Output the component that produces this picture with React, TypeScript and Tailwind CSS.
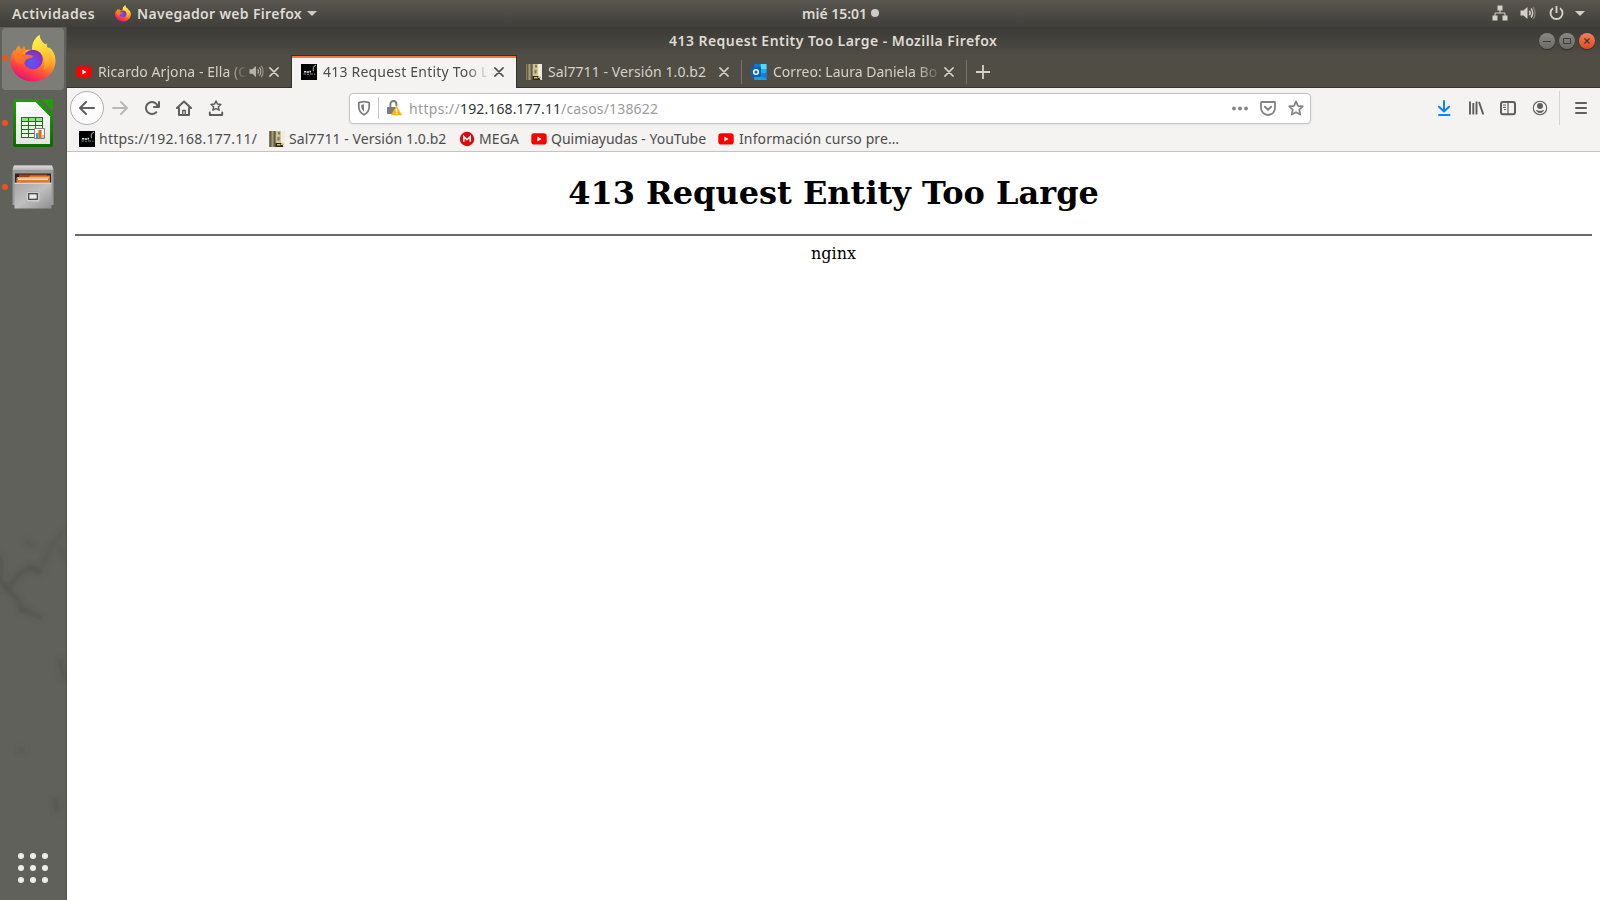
import type { ReactNode } from "react";

function FirefoxLogo({ className, id }: { className: string; id: string }) {
  return (
    <svg className={className} viewBox="0 0 46 47">
      <defs>
        <linearGradient id={`${id}-body`} x1="0.75" y1="0.1" x2="0.35" y2="1">
          <stop offset="0" stopColor="#fff14a" />
          <stop offset="0.3" stopColor="#ffbd2e" />
          <stop offset="0.55" stopColor="#ff7a2c" />
          <stop offset="0.78" stopColor="#ff3b47" />
          <stop offset="1" stopColor="#e2127c" />
        </linearGradient>
        <linearGradient id={`${id}-flame`} x1="0.3" y1="0" x2="0.6" y2="1">
          <stop offset="0" stopColor="#fff44f" />
          <stop offset="0.5" stopColor="#ffd338" />
          <stop offset="1" stopColor="#ff9a28" />
        </linearGradient>
        <radialGradient id={`${id}-globe`} cx="0.4" cy="0.65" r="0.7">
          <stop offset="0" stopColor="#5160e8" />
          <stop offset="0.5" stopColor="#7a3fe0" />
          <stop offset="1" stopColor="#8a29a8" />
        </radialGradient>
        <linearGradient id={`${id}-head`} x1="0" y1="0" x2="0.4" y2="1">
          <stop offset="0" stopColor="#ff9a1f" />
          <stop offset="1" stopColor="#ff5f30" />
        </linearGradient>
      </defs>
      <path
        d="M9 10.500c.5 2 1.500 3.500 3 4l2-3.500c.5 2 1 3.500 2 4 2-.5 4-.5 6 0C22 8 25 3 29.500 0c.5 5 3 7 5.500 9.500l1.500-1c0 2 .5 3.500 1.500 4.500l1.500-.5c4 3.500 6 8 6 13C45.500 37.500 35.500 46.500 23 46.500S.5 37.500.5 26c0-5.500 2-9 4-11.500l.5 3c.5-3 2-5 4-7z"
        fill={`url(#${id}-body)`}
      />
      <path
        d="M29.500 0c.5 5 3 7 5.500 9.500l1.500-1c0 2 .5 3.500 1.500 4.500 2 3 3.500 7 3 11-.5 5-3 9-7.500 11.500 2.500-8 1-16-5-18.500-2.500-1-4.500-1.500-6.500-2C22 8 25 3 29.500 0z"
        fill={`url(#${id}-flame)`}
      />
      <circle cx="23" cy="24.500" r="9.800" fill={`url(#${id}-globe)`} />
      <path
        d="M5 18c.5-3 2-5 4-7.500.5 2 1.500 3.500 3 4l2-3.500c.5 2 1 3.500 1.500 4.500-1.500 1-2.500 2-3.500 3.500 4 1 7 .5 10 1.500 1 .5 1 1.500 0 2-2.500 1-5 1-6.500 3-1 1.500-1 3-2 4C7 29.500 3 24.500 5 18z"
        fill={`url(#${id}-head)`}
      />
    </svg>
  );
}

function YouTubeIcon() {
  return (
    <svg className="h-4 w-4 shrink-0" viewBox="0 0 16 16">
      <rect x="0.300" y="2.300" width="15.400" height="11.200" rx="2.800" fill="#f00" />
      <path d="M6.400 5.600v4.800L10.500 8z" fill="#fff" />
    </svg>
  );
}

function BlackSiteIcon() {
  return (
    <svg className="h-4 w-4 shrink-0" viewBox="0 0 16 16">
      <rect width="16" height="16" fill="#000" />
      <path d="M3 7.800h2M5.500 8h2.500M8.500 7.600h1.500" stroke="#ddd" strokeWidth="1.600" />
      <path d="M2.500 10h2.500M6 10.200h2M9 10h3M13 10.200h1.500" stroke="#999" strokeWidth="0.900" />
      <path d="M15 1c-2.600 1-3.300 3.200-2.600 6.200" stroke="#bbb" strokeWidth="1" fill="none" />
    </svg>
  );
}

function ArchiveSiteIcon() {
  return (
    <svg className="h-4 w-4 shrink-0" viewBox="0 0 16 16">
      <rect width="16" height="16" fill="#f1ecdf" />
      <rect width="7.500" height="16" fill="#857d60" />
      <path d="M1.500 0v16M5.500 0v16" stroke="#5f5842" strokeWidth="0.900" />
      <path d="M3.500 0v16" stroke="#a39b7b" strokeWidth="1.200" />
      <rect x="7.500" width="4.500" height="12" fill="#d8c98b" />
      <path d="M9 1.500h2v2H9zM8.500 6.500h2v3h-2z" fill="#7c6d40" />
      <path d="M8.500 1.200h2.500M8.500 6.200h2.500" stroke="#6a7fc0" strokeWidth="0.900" />
      <path d="M6.500 12h6l2 4h-8z" fill="#2c2819" />
      <path d="M8 13h3.500v1.500H8zM12 12.500h3V14h-3z" fill="#cdbd79" />
    </svg>
  );
}

function MegaIcon() {
  return (
    <svg className="h-4 w-4 shrink-0" viewBox="0 0 16 16">
      <circle cx="8" cy="8" r="7.200" fill="#d9090f" />
      <path d="M4.800 10.800V5.500L8 8.700l3.200-3.200v5.300" stroke="#fff" strokeWidth="1.500" fill="none" />
    </svg>
  );
}

function OutlookIcon() {
  return (
    <svg className="h-4 w-4 shrink-0" viewBox="0 0 16 16">
      <rect x="3.500" y="0" width="12" height="11" rx="0.800" fill="#1490df" />
      <path d="M9.500 0h6v5h-6z" fill="#50d9ff" />
      <path d="M3.500 0h6v3h-6z" fill="#0f78d4" />
      <path d="M9.500 5h6v4h-6z" fill="#28a8ea" />
      <path d="M3 8l7 3.500L16 8v7.200a.8.800 0 0 1-.8.800H3.800a.8.800 0 0 1-.8-.8z" fill="#1b9de8" />
      <path d="M16 8v7.500L9.500 11.700z" fill="#1380cf" />
      <rect x="0" y="3" width="10" height="10" rx="0.800" fill="#0a62b8" />
      <circle cx="5" cy="8" r="2.300" stroke="#fff" strokeWidth="1.500" fill="none" />
    </svg>
  );
}

function SpeakerIcon({ className, tab = false }: { className: string; tab?: boolean }) {
  return (
    <svg className={className} viewBox="0 0 16 16" fill="none">
      <path d="M.5 5.500h3L7.500 2v12l-4-3.500h-3z" fill="currentColor" />
      <path d="M9.300 5.700c1 1.300 1 3.300 0 4.600" stroke="currentColor" strokeWidth={tab ? 1.200 : 1.500} />
      <path d="M11 3.600c2.200 2.400 2.200 6.400 0 8.800" stroke="currentColor" strokeWidth={tab ? 1.200 : 1.500} />
      <path
        d="M13 2c2.800 3.300 2.800 8.700 0 12"
        stroke="currentColor"
        strokeOpacity={tab ? 0.8 : 0.35}
        strokeWidth={tab ? 1.100 : 1.500}
      />
    </svg>
  );
}

function CloseIcon({ className }: { className: string }) {
  return (
    <svg className={className} viewBox="0 0 10 10" stroke="currentColor" strokeWidth="1.500" strokeLinecap="round">
      <path d="M.9.900l8.200 8.200M9.100.900L.9 9.100" />
    </svg>
  );
}

function TopBar() {
  return (
    <header className="grid h-[27px] shrink-0 grid-cols-[1fr_auto_1fr] items-center bg-linear-to-b from-[#5a574f] to-[#3f3e3a] pb-px text-[14px] leading-[19px] font-semibold text-[#dfdbd2]">
      <div className="flex items-center pl-3">
        <span className="w-[103px] tracking-[0.410px]">Actividades</span>
        <FirefoxLogo id="ff-small" className="mr-[6px] h-[17px] w-[16px]" />
        <span className="w-[170px] tracking-[0.320px]">Navegador web Firefox</span>
        <svg className="h-[5px] w-[10px]" viewBox="0 0 10 5">
          <path d="M0 0h10L5 5z" fill="#d0ccc4" />
        </svg>
      </div>
      <div className="flex items-center gap-[5px] pl-[81px]">
        <span className="w-[64px] whitespace-nowrap">mié 15:01</span>
        <span className="h-2 w-2 rounded-full bg-[#cfcbc4]" />
      </div>
      <div className="flex items-center justify-end pr-[15px] text-[#d4d0c9]">
        <svg className="mr-3 h-[16px] w-[16px]" viewBox="0 0 16 16" fill="currentColor">
          <path d="M5.500.500h5v5h-5zM.5 10.500h5v5h-5zM10.500 10.500h5v5h-5z" />
          <path d="M8 5v3M3 11V8h10v3" fill="none" stroke="currentColor" />
        </svg>
        <SpeakerIcon className="mr-[13px] h-[16px] w-[16px]" />
        <svg className="mr-[11px] h-[15px] w-[15px]" viewBox="0 0 15 15" fill="none" stroke="currentColor" strokeWidth="1.900">
          <path d="M4 2.200a6 6 0 1 0 7 0M7.500 0v7" />
        </svg>
        <svg className="h-[5px] w-[10px]" viewBox="0 0 10 5">
          <path d="M0 0h10L5 5z" fill="currentColor" />
        </svg>
      </div>
    </header>
  );
}

function DockItem({ children, active = false }: { children: ReactNode; active?: boolean }) {
  return (
    <div className={`relative ml-[2px] flex h-[62px] w-[62px] items-center justify-center rounded-[4px] ${active ? "bg-[#7d7d78] pb-[2px]" : ""}`}>
      <span className="absolute left-0 h-[6px] w-[6px] rounded-full bg-[#e95420]" />
      {children}
    </div>
  );
}

function DockSmudges() {
  return (
    <svg className="absolute inset-0 h-full w-full" viewBox="0 0 67 873" preserveAspectRatio="none">
      <defs>
        <filter id="smudge" x="-50%" y="-50%" width="200%" height="200%">
          <feGaussianBlur stdDeviation="2.600" />
        </filter>
      </defs>
      <g filter="url(#smudge)" stroke="#4b4b45" fill="none" strokeLinecap="round">
        <path d="M0 528v25l8 11 10 7 4 14M24 582l18 9" strokeWidth="4" opacity="0.600" />
        <path d="M10 560l8-12 12-8M32 541l8 4" strokeWidth="6" opacity="0.400" />
        <path d="M30 540l12 5M44 538l8-20 13-14M60 520l7 12M26 514l8 6" strokeWidth="4" opacity="0.400" />
        <path d="M61 632l4 20M56 772l2 12" strokeWidth="4" opacity="0.550" />
        <path d="M20 723h4" strokeWidth="5" opacity="0.350" />
      </g>
    </svg>
  );
}

function Dock() {
  return (
    <aside className="relative flex w-[67px] shrink-0 flex-col border-r border-[#50504b] bg-[#61615c]">
      <DockSmudges />
      <div className="relative flex flex-1 flex-col gap-[2px] pt-px">
        <DockItem active>
          <FirefoxLogo id="ff-large" className="h-[47px] w-[46px]" />
        </DockItem>
        <DockItem>
          <svg className="h-12 w-10" viewBox="0 0 40 48">
            <defs>
              <linearGradient id="calc-frame" x1="0" y1="0" x2="0" y2="1">
                <stop offset="0" stopColor="#18a303" />
                <stop offset="1" stopColor="#106802" />
              </linearGradient>
              <linearGradient id="calc-page" x1="0" y1="0" x2="0" y2="1">
                <stop offset="0" stopColor="#fff" />
                <stop offset="1" stopColor="#e4e4e4" />
              </linearGradient>
            </defs>
            <path d="M2 0h22l16 15.500V46a2 2 0 0 1-2 2H2a2 2 0 0 1-2-2V2a2 2 0 0 1 2-2z" fill="url(#calc-frame)" />
            <path d="M28 0h10a2 2 0 0 1 2 2v10z" fill="#18a303" />
            <path d="M3 3h19.500L37 17.500V45H3z" fill="url(#calc-page)" />
            <path d="M8 18h22v21H8z" fill="#107c02" />
            <path d="M9 19h6v3H9zM16 19h6v3h-6zM23 19h6v3h-6z" fill="#92e285" />
            <path d="M9 23h6v3H9zM16 23h6v3h-6zM23 23h6v3h-6zM9 27h6v3H9zM16 27h6v3h-6zM23 27h6v3h-6zM9 31h6v3H9zM16 31h6v3h-6zM9 35h6v3H9zM16 35h6v3h-6z" fill="#e9fbe5" />
            <path d="M21.500 29.500h10v10h-10z" fill="#fff" stroke="#808080" />
            <path d="M23 34h2.500v5H23z" fill="#2a9fd0" />
            <path d="M25.500 31h3v8h-3z" fill="#e2631c" />
            <path d="M28.500 36H31v3h-2.500z" fill="#f5c22b" />
          </svg>
        </DockItem>
        <DockItem>
          <svg className="h-[44px] w-[42px]" viewBox="0 0 42 44">
            <defs>
              <linearGradient id="cabinet-top" x1="0" y1="0" x2="0" y2="1">
                <stop offset="0" stopColor="#dedede" />
                <stop offset="1" stopColor="#b5b5b5" />
              </linearGradient>
              <linearGradient id="cabinet-front" x1="0" y1="0" x2="1" y2="1">
                <stop offset="0" stopColor="#a5a5a5" />
                <stop offset="0.500" stopColor="#c0c0c0" />
                <stop offset="1" stopColor="#8e8e8e" />
              </linearGradient>
            </defs>
            <path d="M2 .500h38l1.500 4.500V40h-41V5z" fill="#999" />
            <path d="M2 .500h38l1.500 4.500h-41z" fill="url(#cabinet-top)" />
            <path d="M3 8.500h36V18H3z" fill="#2c2420" />
            <path d="M7 9.500h28V12H7z" fill="#a83c14" />
            <path d="M4.500 12.500h12l2-2h19.500V18h-33.500z" fill="#e07a30" />
            <path d="M5 12.500h32" stroke="#ffb46a" strokeWidth="0.800" />
            <path d="M6 13.500h30v1.300H6z" fill="#fff" />
            <path d="M2.500 17.500h37v26h-37z" fill="url(#cabinet-front)" />
            <path d="M2.500 18.500h37" stroke="#d5d5d5" />
            <rect x="14" y="26.500" width="14" height="10.500" rx="2" fill="#d0d0d0" stroke="#b2b2b2" />
            <rect x="16.700" y="28.700" width="8.600" height="5.600" fill="#ededed" stroke="#454545" strokeWidth="1.300" />
          </svg>
        </DockItem>
      </div>
      <div className="relative mb-[17px] ml-[18px] grid w-[30px] grid-cols-3 gap-[6px]">
        {Array.from({ length: 9 }, (_, i) => (
          <span key={i} className="h-[6px] w-[6px] rounded-full bg-[#eeeeec]" />
        ))}
      </div>
    </aside>
  );
}

function WindowButton({ children, close = false }: { children: ReactNode; close?: boolean }) {
  return (
    <span
      className={`flex h-4 w-4 items-center justify-center rounded-full shadow-[0_1px_1px_#2d2c29] ${
        close ? "bg-linear-to-b from-[#f37f58] to-[#df4b1a]" : "bg-linear-to-b from-[#8b8981] to-[#6b6a64]"
      }`}
    >
      {children}
    </span>
  );
}

function TitleBar() {
  return (
    <div className="grid h-[28px] shrink-0 grid-cols-[1fr_auto_1fr] items-center bg-linear-to-b from-[#3b3a36] to-[#4f4c45] pb-[2px] text-[14px] leading-[19px] font-semibold text-[#dfdbd2]">
      <span />
      <span className="w-[329px] tracking-[0.450px] whitespace-nowrap">413 Request Entity Too Large - Mozilla Firefox</span>
      <div className="flex justify-end gap-1 pt-px pr-[5px]">
        <WindowButton>
          <svg className="h-4 w-4" viewBox="0 0 16 16" stroke="#3c3b37">
            <path d="M4 8.500h8" />
          </svg>
        </WindowButton>
        <WindowButton>
          <svg className="h-4 w-4" viewBox="0 0 16 16" stroke="#3c3b37" fill="none">
            <path d="M4.500 5.500h7v5h-7z" />
          </svg>
        </WindowButton>
        <WindowButton close>
          <svg className="h-4 w-4" viewBox="0 0 16 16" stroke="#3c3b37" strokeWidth="1.300">
            <path d="M5.500 5.500l5 5M10.500 5.500l-5 5" />
          </svg>
        </WindowButton>
      </div>
    </div>
  );
}

function TabStrip() {
  return (
    <div className="flex h-[33px] shrink-0 bg-[#504d45] text-[14px] leading-[19px] text-[#d5d1c8]">
      <div className="flex w-[224px] items-center border-b border-[#33322e] pt-px pl-[9px]">
        <YouTubeIcon />
        <span className="ml-[6px] w-[149px] overflow-hidden mask-r-from-[130px] mask-r-to-[149px] tracking-[0.060px] whitespace-nowrap">Ricardo Arjona - Ella (O</span>
        <SpeakerIcon tab className="ml-[2px] h-[15px] w-[15px] text-[#b5b2aa]" />
        <CloseIcon className="ml-[5px] h-[10px] w-[10px]" />
      </div>
      <div className="flex w-[226px] items-center border-x border-t border-x-[#33322e] border-t-[#33322e] bg-[#f4f3f2] pl-[9px] text-[#4c4c4c] shadow-[inset_0_2px_#f07746]">
        <BlackSiteIcon />
        <span className="ml-[6px] w-[164px] overflow-hidden mask-r-from-[144px] mask-r-to-[166px] pb-px tracking-[0.210px] whitespace-nowrap">413 Request Entity Too L</span>
        <CloseIcon className="ml-[7px] h-[10px] w-[10px]" />
      </div>
      <div className="flex flex-1 items-center border-b border-[#33322e] pt-px pl-[9px]">
        <ArchiveSiteIcon />
        <span className="ml-[6px] w-[164px] tracking-[0.090px] whitespace-nowrap">Sal7711 - Versión 1.0.b2</span>
        <CloseIcon className="ml-[7px] h-[10px] w-[10px]" />
        <span className="ml-[12px] h-6 w-px bg-[#77746c]" />
        <span className="ml-[9px] flex">
          <OutlookIcon />
        </span>
        <span className="ml-[6px] w-[164px] overflow-hidden mask-r-from-[143px] mask-r-to-[170px] whitespace-nowrap">Correo: Laura Daniela Bo</span>
        <CloseIcon className="ml-[7px] h-[10px] w-[10px]" />
        <span className="ml-[12px] h-6 w-px bg-[#77746c]" />
        <svg className="ml-[9px] h-[14px] w-[14px]" viewBox="0 0 14 14" stroke="currentColor" strokeWidth="1.800">
          <path d="M7 0v14M0 7h14" />
        </svg>
      </div>
    </div>
  );
}

function Glyph({ children, className = "" }: { children: ReactNode; className?: string }) {
  return (
    <svg
      className={`h-4 w-4 shrink-0 ${className}`}
      viewBox="0 0 16 16"
      fill="none"
      stroke="currentColor"
      strokeWidth="2"
      strokeLinecap="round"
      strokeLinejoin="round"
    >
      {children}
    </svg>
  );
}

function UrlBar() {
  return (
    <div className="flex h-[31px] w-[962px] items-center rounded-[4px] border border-[#c3c2c0] bg-white pb-px text-[14px] leading-[19px] text-[#9b9b9b] shadow-[0_1px_3px_rgba(0,0,0,0.06)]">
      <Glyph className="ml-[6px] text-[#7b7b7b]">
        <path d="M8 1.500l5.200 1.200v4c0 3.500-2 6.400-5.200 8.100-3.200-1.700-5.200-4.600-5.200-8.100v-4z" strokeWidth="1.700" />
        <path d="M8 4.200v7.600c-1.700-1.300-2.700-3.200-2.700-5.200V4.800z" fill="currentColor" stroke="none" />
      </Glyph>
      <span className="mx-[6px] h-[22px] w-px bg-[#c8c8c8]" />
      <svg className="ml-[1px] h-4 w-4" viewBox="0 0 16 16" fill="none">
        <path d="M4.400 7V4a3 3 0 0 1 6 0V6" stroke="#7b7b7b" strokeWidth="1.900" />
        <path d="M2 7h9v7H2a1 1 0 0 1-1-1V8a1 1 0 0 1 1-1z" fill="#7b7b7b" />
        <path d="M10.500 5.800L15.700 15H5.300z" fill="#ffb21a" stroke="#ffb21a" strokeWidth="0.500" strokeLinejoin="round" />
        <path d="M10.500 8.700v3M10.500 12.800v1.200" stroke="#fff" strokeWidth="1.400" />
      </svg>
      <div className="ml-[7px] flex flex-1 pt-px">
        <span className="w-[51px] tracking-[0.340px]">https://</span>
        <span className="w-[101px] tracking-[0.130px] text-[#333]">192.168.177.11</span>
        <span className="tracking-[0.170px]">/casos/138622</span>
      </div>
      <div className="flex items-center gap-[12px] pr-[6px] text-[#858585]">
        <Glyph>
          <g fill="currentColor" stroke="none">
            <circle cx="2" cy="8.500" r="1.900" />
            <circle cx="8" cy="8.500" r="1.900" />
            <circle cx="14" cy="8.500" r="1.900" />
          </g>
        </Glyph>
        <Glyph>
          <path d="M1.500 2h13a.5.500 0 0 1 .5.500V8a7 7 0 0 1-14 0V2.500a.5.500 0 0 1 .5-.5z" strokeWidth="1.800" />
          <path d="M4.900 6.700L8 9.700l3.100-3" />
        </Glyph>
        <Glyph>
          <path d="M8 1.500l2 4.300 4.800.6-3.500 3.200.9 4.900L8 12.200l-4.200 2.300.9-4.900L1.200 6.400 6 5.800z" strokeWidth="1.800" />
        </Glyph>
      </div>
    </div>
  );
}

function NavBar() {
  return (
    <div className="flex h-[40px] shrink-0 items-center pl-[3px] text-[#5e5e5e]">
      <span className="flex h-[34px] w-[34px] shrink-0 items-center justify-center rounded-full border border-[#b0afad] bg-[#fcfcfc]">
        <Glyph>
          <path d="M15 8H1.200M7 2L1 8l6 6" />
        </Glyph>
      </span>
      <Glyph className="ml-[8px] text-[#b9b8b7]">
        <path d="M1 8h13.800M9 2l6 6-6 6" />
      </Glyph>
      <svg className="ml-4 h-4 w-4" viewBox="0 0 16 16" fill="currentColor">
        <path d="M15 1a1 1 0 0 0-1 1v2.418A6.995 6.995 0 1 0 8 15a6.954 6.954 0 0 0 4.950-2.050 1 1 0 0 0-1.414-1.414A5.019 5.019 0 1 1 12.549 6H10a1 1 0 0 0 0 2h5a1 1 0 0 0 1-1V2a1 1 0 0 0-1-1z" />
      </svg>
      <Glyph className="ml-4">
        <path d="M1 8l7-6.500L15 8M3 8v7h10V8" />
        <path d="M6.700 14.500v-4h2.600v4" strokeWidth="1.400" />
      </Glyph>
      <Glyph className="ml-4">
        <path d="M8 1l1.500 3.100 3.400.4-2.500 2.300.7 3.400L8 8.600l-3.100 1.600.7-3.400-2.500-2.300 3.400-.4z" strokeWidth="1.500" />
        <path d="M1.800 12.500V15h12.400v-2.500" strokeWidth="1.900" />
      </Glyph>
      <div className="ml-[125px]">
        <UrlBar />
      </div>
      <Glyph className="ml-[125px] text-[#0a84ff]">
        <path d="M8 1v10M3 6.800l5 4.700 5-4.700M3 15h10.500" />
      </Glyph>
      <Glyph className="ml-4">
        <path d="M2 1.500v13M5.300 3v11.500M8.500 1.500v13M11 2l4.300 12.500" strokeWidth="1.900" strokeLinecap="butt" />
      </Glyph>
      <Glyph className="ml-4">
        <rect x="1" y="2" width="14" height="12.200" rx="2" />
        <path d="M8 2v12" strokeWidth="1.200" />
        <path d="M3 5h3M3 7.300h3M4 9.600h2" strokeWidth="1" strokeLinecap="butt" />
      </Glyph>
      <Glyph className="ml-4">
        <circle cx="8" cy="8" r="6.700" strokeWidth="1.100" />
        <circle cx="8" cy="6" r="3" fill="currentColor" stroke="none" />
        <path d="M3.900 9.800c1.300.4 2 1 4.100 1s2.800-.6 4.100-1c-.4 1.800-2 3.200-4.100 3.200s-3.700-1.400-4.100-3.200z" fill="currentColor" stroke="none" />
      </Glyph>
      <span className="ml-[11px] h-[34px] w-px bg-[#d5d4d2]" />
      <Glyph className="ml-[13px]">
        <path d="M3 3h10M3 8h10M3 13h10" />
      </Glyph>
    </div>
  );
}

function Bookmark({ icon, className, children }: { icon: ReactNode; className: string; children: ReactNode }) {
  return (
    <div className="flex items-center gap-[4px]">
      {icon}
      <span className={`pb-[2px] whitespace-nowrap ${className}`}>{children}</span>
    </div>
  );
}

function BookmarksBar() {
  return (
    <div className="flex h-[24px] shrink-0 items-center border-b border-[#c4c3c2] pb-px pl-[12px] text-[14px] leading-[19px] text-[#4c4c4c]">
      <Bookmark icon={<BlackSiteIcon />} className="w-[170px] tracking-[0.230px]">https://192.168.177.11/</Bookmark>
      <Bookmark icon={<ArchiveSiteIcon />} className="w-[170px] tracking-[0.060px]">Sal7711 - Versión 1.0.b2</Bookmark>
      <Bookmark icon={<MegaIcon />} className="w-[52px] tracking-[0.150px]">MEGA</Bookmark>
      <Bookmark icon={<YouTubeIcon />} className="w-[167px]">Quimiayudas - YouTube</Bookmark>
      <Bookmark icon={<YouTubeIcon />} className="w-[170px] pl-px tracking-[0.120px]">Información curso pre…</Bookmark>
    </div>
  );
}

export default function App() {
  return (
    <div className="flex h-[900px] w-[1600px] flex-col overflow-hidden bg-[#3c3b37] font-['Noto_Sans',sans-serif]">
      <TopBar />
      <div className="flex min-h-0 flex-1">
        <Dock />
        <div className="flex min-w-0 flex-1 flex-col bg-white">
          <TitleBar />
          <TabStrip />
          <div className="flex flex-col bg-[#f4f3f2]">
            <NavBar />
            <BookmarksBar />
          </div>
          <main className="flex-1 px-2 pt-[23px] text-center font-['DejaVu_Serif',serif] text-black">
            <h1 className="text-[32px] leading-[37px] font-bold">413 Request Entity Too Large</h1>
            <hr className="mt-[22px] h-[2px] border-0 bg-[#6a6869]" />
            <p className="mt-[8px] text-[16px] leading-[19px]">nginx</p>
          </main>
        </div>
      </div>
    </div>
  );
}
